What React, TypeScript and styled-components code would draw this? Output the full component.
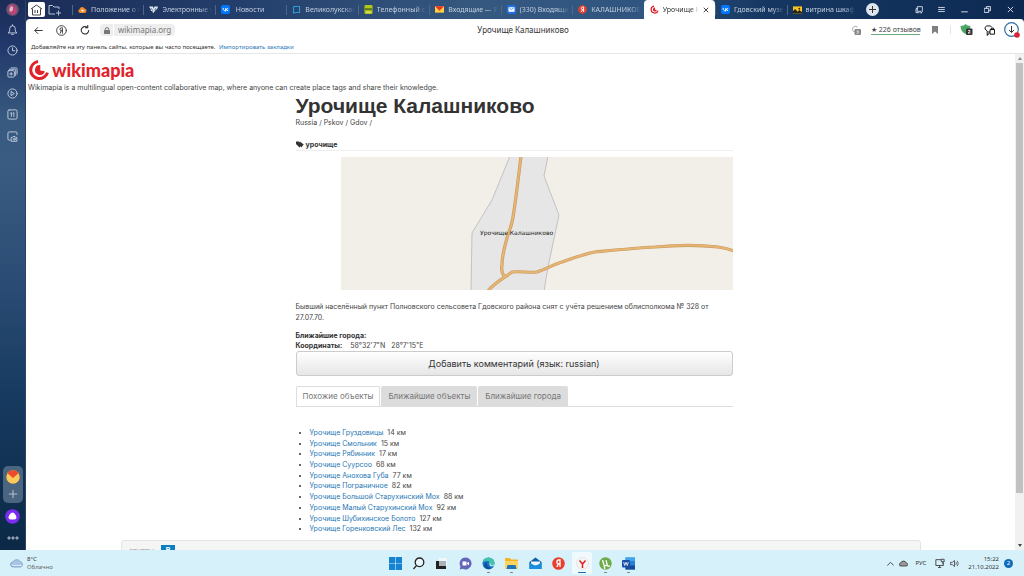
import React from 'react';
import styled, { createGlobalStyle, css } from 'styled-components';

const ui = '"Noto Sans", "Open Sans", sans-serif';
const arial = '"Liberation Sans", Arial, sans-serif';
const body = 'Inter, "Liberation Sans", Arial, sans-serif';

const Global = createGlobalStyle`
  *, *::before, *::after { box-sizing: border-box; }
  body { margin: 0; background: #fff; overflow: hidden; }
  button, input { font: inherit; color: inherit; border: 0; padding: 0; margin: 0; background: none; }
  a { text-decoration: none; }
  svg { display: block; flex: none; }
`;

/* ---------- shell ---------- */
const Desktop = styled.div`
  height: 100vh;
  display: flex;
  flex-direction: column;
  font-family: ${ui};
  font-size: 7px;
`;
const Browser = styled.div`
  flex: 1;
  min-height: 0;
  display: flex;
  background: #1c2f5b;
`;
const Sidebar = styled.nav`
  width: 26px;
  flex: none;
  display: flex;
  flex-direction: column;
  align-items: center;
  color: #c6d2e2;
  border-right: 1px solid #2b4468;
  background: linear-gradient(#1b2c57 0, #21386a 8%, #385a80 22%, #3a5c82 30%, #2a4c74 52%, #173a60 72%, #0b2946 100%);
`;
const Avatar = styled.button`
  width: 13px;
  height: 13px;
  margin: 3px 0;
`;
const SideTools = styled.div`
  height: 128px;
  display: grid;
  grid-auto-rows: 1fr;
`;
const SideButton = styled.button`
  width: 24px;
  display: flex;
  align-items: center;
  justify-content: center;
`;
const SideBottom = styled.div`
  margin-top: auto;
  padding-bottom: 6px;
  display: flex;
  flex-direction: column;
  align-items: center;
  gap: 6px;
`;
const Pinned = styled.div`
  width: 20px;
  height: 37px;
  border-radius: 5px;
  background: #4b6580;
  display: flex;
  flex-direction: column;
  align-items: center;
  justify-content: space-evenly;
`;
const Main = styled.div`
  flex: 1;
  min-width: 0;
  display: flex;
  flex-direction: column;
`;

/* ---------- tab strip ---------- */
const Strip = styled.div`
  height: 19px;
  flex: none;
  display: flex;
  color: #c3cfdf;
  background: linear-gradient(90deg, #1b2c57 0, #243f6c 22%, #35587f 45%, #2f5580 62%, #163761 74%, #10305a 90%, #0d2850 100%);
`;
const StripStart = styled.div`
  width: 46px;
  flex: none;
  display: flex;
  align-items: center;
  gap: 3px;
  padding-left: 2px;
`;
const HomeTab = styled.button`
  width: 17px;
  height: 15px;
  border-radius: 2px;
  background: #fff;
  display: grid;
  place-items: center;
`;
const PlainButton = styled.button`
  display: grid;
  place-items: center;
`;
const Tabs = styled.div`
  flex: 1;
  min-width: 0;
  display: grid;
  grid-auto-flow: column;
  grid-auto-columns: minmax(0, 1fr);
`;
const fade = css`
  mask-image: linear-gradient(90deg, #000 78%, transparent 100%);
  overflow: hidden;
  white-space: pre;
`;
const Tab = styled.button<{ $active?: boolean }>`
  display: flex;
  align-items: center;
  gap: 4px;
  padding: 0 3px 0 0;
  text-align: left;
  font-size: 7px;
  line-height: 19px;
  &::before {
    content: '';
    width: 1px;
    height: 10px;
    margin-right: 1px;
    background: ${p => (p.$active ? 'transparent' : '#4d6788')};
  }
  ${p => p.$active && css`
    padding-right: 6px;
    background: #fff;
    color: #333;
    border-radius: 4px 4px 0 0;
  `}
`;
const TabLabel = styled.span`
  flex: 1;
  min-width: 0;
  ${fade}
`;
const WindowControls = styled.div`
  width: 166px;
  flex: none;
  display: flex;
  align-items: center;
  padding: 0 2px 0 8px;
`;
const NewTab = styled.button`
  width: 13px;
  height: 13px;
  border-radius: 50%;
  background: #dfe5ec;
  display: grid;
  place-items: center;
  margin-right: auto;
`;
const ControlButton = styled.button`
  width: 23px;
  height: 19px;
  display: grid;
  place-items: center;
  color: #dbe4ee;
`;

/* ---------- toolbar ---------- */
const Chrome = styled.div`
  flex: none;
  background: #fff;
  border-radius: 4px 4px 0 0;
  border-bottom: 1px solid #e6e6e6;
`;
const Toolbar = styled.div`
  height: 22px;
  display: grid;
  grid-template-columns: 1fr auto 1fr;
  align-items: center;
  padding-right: 4px;
`;
const ToolLeft = styled.div`
  display: flex;
  align-items: center;
  padding-left: 1px;
`;
const NavButton = styled.button`
  width: 23px;
  height: 16px;
  display: grid;
  place-items: center;
  color: #333;
`;
const Lock = styled.button`
  width: 13px;
  height: 12px;
  margin-left: 4px;
  border-radius: 4px 0 0 4px;
  background: #eee;
  display: grid;
  place-items: center;
`;
const Address = styled.input`
  width: 61px;
  height: 12px;
  margin-left: 1px;
  padding: 0 4px;
  border-radius: 0 4px 4px 0;
  background: #eee;
  color: #777;
  font-size: 8px;
  line-height: 12px;
`;
const PageTitle = styled.div`
  font-size: 8px;
  line-height: 12px;
  color: #333;
`;
const ToolRight = styled.div`
  display: flex;
  align-items: center;
  justify-content: flex-end;
  gap: 7px;
`;
const ToolButton = styled.button`
  width: 16px;
  height: 16px;
  display: grid;
  place-items: center;
`;
const Reviews = styled.button`
  && { border-bottom: 1px solid #6fae7c; }
  width: 49px;
  font-size: 7px;
  line-height: 9px;
  color: #444;
  white-space: nowrap;
`;
const Divider = styled.span`
  width: 1px;
  height: 8px;
  background: #e4e4e4;
`;
const Bookmarks = styled.div`
  height: 12px;
  padding-left: 5px;
  font-size: 6px;
  line-height: 12px;
  color: #333;
  a { color: #2a7ab8; margin-left: 2px; }
`;

/* ---------- page ---------- */
const Viewport = styled.div`
  flex: 1;
  min-height: 0;
  display: flex;
  background: #fff;
`;
const Page = styled.main`
  flex: 1;
  min-width: 0;
  overflow: hidden;
  padding-top: 5px;
  font-family: ${body};
  font-size: 7px;
  line-height: 11px;
  color: #444;
`;
const Scrollbar = styled.div`
  width: 9px;
  flex: none;
  display: flex;
  flex-direction: column;
  align-items: center;
  background: #f1f1f1;
`;
const Arrow = styled.span<{ $down?: boolean }>`
  height: 9px;
  display: grid;
  place-items: center;
  &::before {
    content: '';
    border: 2px solid transparent;
    ${p => (p.$down ? 'border-top: 3px solid #444; border-bottom: 0;' : 'border-bottom: 3px solid #888; border-top: 0;')}
  }
`;
const Track = styled.div`
  flex: 1;
  width: 100%;
  padding: 0 1px;
`;
const Thumb = styled.div`
  height: 90%;
  background: #c1c1c1;
`;
const Logo = styled.a`
  height: 22px;
  margin-left: 2px;
  display: flex;
  align-items: center;
  gap: 2px;
  color: #e0222b;
  font: 900 18px/20px Lato, sans-serif;
  width: max-content;
`;
const Tagline = styled.p`
  margin: 0 0 0 2px;
  line-height: 13px;
`;
const Container = styled.div`
  max-width: 800px;
  margin: 0 auto;
`;
const Column = styled.article`
  max-width: 437px;
  margin-left: 175px;
`;
const Heading = styled.h1`
  margin: 0;
  font-family: ${arial};
  font-size: 21px;
  line-height: 23px;
  color: #333;
`;
const Crumbs = styled.nav`
  a { color: #444; }
`;
const TagRow = styled.div`
  margin-top: 11px;
  display: flex;
  align-items: center;
  gap: 2px;
  border-bottom: 1px solid #eee;
  color: #333;
  font-weight: bold;
`;
const MapBox = styled.div`
  margin: 6px 0 11px 45px;
  height: 133px;
  background: #f2efe9;
  svg { width: 100%; height: 100%; }
`;
const Paragraph = styled.p`
  margin: 0 0 7px;
`;
const Fact = styled.div<{ $tight?: boolean }>`
  line-height: ${p => (p.$tight ? 10 : 11)}px;
  b { color: #333; margin-right: 6px; }
  span { margin-right: 4px; }
`;
const CommentButton = styled.button`
  && { border: 1px solid #ccc; }
  display: block;
  width: 100%;
  height: 25px;
  border-radius: 3px;
  background: linear-gradient(#fff, #e6e6e6);
  font-size: 9px;
  color: #333;
`;
const PageTabs = styled.div`
  margin-top: 10px;
  display: flex;
  gap: 1px;
  border-bottom: 1px solid #ddd;
`;
const PageTab = styled.button<{ $active?: boolean }>`
  && { border: 1px solid #ddd; border-bottom: 0; }
  height: 20px;
  padding: 0 6px;
  border-radius: 2px 2px 0 0;
  font-size: 8px;
  color: #777;
  background: ${p => (p.$active ? '#fff' : '#dcdcdc')};
  && { margin-bottom: ${p => (p.$active ? '-1px' : '0')}; }
`;
const Places = styled.ul`
  height: 107px;
  margin: 21px 0 5px;
  padding-left: 14px;
  line-height: 10px;
  display: grid;
  grid-auto-rows: minmax(0, 1fr);
  a { color: #1f77b5; margin-right: 4px; }
  li::marker { color: #333; }
`;
const Footer = styled.footer`
  height: 30px;
  padding: 4px 8px;
  display: flex;
  gap: 7px;
  border: 1px solid #e3e3e3;
  border-radius: 3px 3px 0 0;
  background: #f5f5f5;
  color: #999;
  line-height: 12px;
`;
const VkLink = styled.a`
  width: 14px;
  height: 14px;
  background: #0d7fc0;
  color: #fff;
  text-align: center;
  font-weight: bold;
`;

/* ---------- taskbar ---------- */
const Taskbar = styled.footer`
  height: 26px;
  flex: none;
  display: grid;
  grid-template-columns: 1fr auto 1fr;
  align-items: center;
  background: #d7f1fa;
  color: #333;
  font-size: 6px;
  line-height: 8px;
`;
const Weather = styled.button`
  display: flex;
  align-items: center;
  gap: 3px;
  && { padding-left: 10px; }
  text-align: left;
  span { display: block; }
  span + span { color: #666; }
`;
const Apps = styled.div`
  width: 257px;
  height: 26px;
  display: grid;
  grid-auto-flow: column;
  grid-auto-columns: 1fr;
`;
const AppButton = styled.button<{ $mark?: 'open' | 'active' }>`
  display: flex;
  flex-direction: column;
  align-items: center;
  justify-content: flex-end;
  gap: 2px;
  height: 22px;
  margin: 2px 2px;
  border-radius: 2px;
  background: ${p => (p.$mark === 'active' ? '#f0fafd' : 'transparent')};
  &::after {
    content: '';
    height: 1px;
    border-radius: 1px;
    margin-bottom: 1px;
    width: ${p => (p.$mark === 'active' ? 8 : 3)}px;
    background: ${p => (p.$mark === 'active' ? '#1470b8' : p.$mark ? '#6d8490' : 'transparent')};
  }
`;
const Tray = styled.div`
  display: flex;
  align-items: center;
  justify-content: flex-end;
  gap: 5px;
  padding-right: 11px;
`;
const Language = styled.button`
  font-size: 6px;
  margin: 0 4px 0 3px;
`;
const Clock = styled.button`
  text-align: right;
  margin-left: 4px;
  span { display: block; }
`;
const Badge = styled.span`
  width: 9px;
  height: 9px;
  border-radius: 50%;
  background: #0f6cbd;
  color: #fff;
  text-align: center;
  line-height: 9px;
`;

/* ---------- drawings ---------- */
const Line = ({ s = 11, children, w = 1, vb = 12 }: { s?: number; w?: number; vb?: number; children: React.ReactNode }) => (
  <svg width={s} height={s} viewBox={`0 0 ${vb} ${vb}`} fill="none" stroke="currentColor" strokeWidth={w} strokeLinecap="round" strokeLinejoin="round" aria-hidden="true">
    {children}
  </svg>
);

const Swirl = ({ s }: { s: number }) => (
  <svg width={s} height={s} viewBox="0 0 22 22" aria-hidden="true">
    <path d="M10 2.500A8.600 8.600 0 1 0 19.500 13.600" fill="none" stroke="#e0222b" strokeWidth="3" />
    <path d="M12.300 6V11.500l4.500.8A5 5 0 1 1 12.300 6z" fill="#e0222b" />
  </svg>
);

const Vk = () => (
  <svg width="9" height="9" viewBox="0 0 9 9"><rect width="9" height="9" rx="2" fill="#0077ff" /><path d="M2 3c.2 2 1.200 3 2.800 3V3M7 3C6.500 4 5.800 4.500 4.800 4.500 5.800 4.600 6.600 5.200 7 6" stroke="#fff" fill="none" /></svg>
);

const favicons: Record<string, React.ReactNode> = {
  cloud: <svg width="9" height="9" viewBox="0 0 9 9"><path d="M2.200 8A2 2 0 0 1 1.500 4.200 2.700 2.700 0 0 1 6.600 3.500 2.300 2.300 0 0 1 6.800 8z" fill="#f08a2c" /><circle cx="4.500" cy="5.600" r="1.200" fill="#fff3dc" /></svg>,
  wings: <svg width="9" height="9" viewBox="0 0 9 9"><path d="M0 1.500h4l.7 2 .8-2H9L8 4.500H6.500L6 6.500H5L4.500 8.500 3 6H2L1.500 4z" fill="#dde5ee" /><path d="M2 3l2 3M7 3L5.500 5" stroke="#2c466f" strokeWidth=".6" /></svg>,
  vk: <Vk />,
  book: <svg width="9" height="9" viewBox="0 0 9 9"><path d="M2 1.500h5.500v6H4M4 7.500L1.500 8V2L3 1.500" stroke="#2e9bd6" fill="none" strokeWidth="1.100" /></svg>,
  phone: <svg width="9" height="9" viewBox="0 0 9 9"><rect x=".5" width="8" height="9" rx="1" fill="#b4c51c" /><path d="M1 3.200h7v2H1z" fill="#5b7c14" /><path d="M2 7h5" stroke="#e9ef9a" /></svg>,
  mail: <svg width="9" height="9" viewBox="0 0 10 9"><path d="M0 1h10v7H0z" fill="#ffcf3f" /><path d="M0 1h10L5 6z" fill="#e8342a" /></svg>,
  at: <svg width="9" height="9" viewBox="0 0 9 9"><rect width="9" height="9" rx="2" fill="#1f6fe5" /><path d="M1.500 2.200h6v4.600h-6z" fill="#fff" /><path d="M2.500 3l2 1.500 2-1.500" stroke="#1f6fe5" fill="none" strokeWidth=".8" /></svg>,
  ya: <svg width="9" height="9" viewBox="0 0 10 10"><circle cx="5" cy="5" r="4.800" fill="#e3402f" /><path d="M6.200 7.800V2.200H5.300a1.500 1.500 0 0 0 0 3.100h.9M5 5.300L3.700 7.800" stroke="#fff" fill="none" /></svg>,
  swirl: <Swirl s={9} />,
  photo: <svg width="9" height="8" viewBox="0 0 10 8"><path d="M0 0h10v8H0z" fill="#f8c51f" /><path d="M0 8V5l2.500-2L5 6l2-2 3 2.500V8z" fill="#26231a" /><circle cx="7" cy="2.500" r="1" fill="#26231a" /></svg>,
};

const tabs = [
  ['cloud', 'Положение о п'],
  ['wings', 'Электронные у'],
  ['vk', ' Новости'],
  ['book', 'Великолукская'],
  ['phone', 'Телефонный с'],
  ['mail', 'Входящие — Я'],
  ['at', '(330) Входящи'],
  ['ya', 'КАЛАШНИКОВ'],
  ['swirl', 'Урочище Ка'],
  ['vk', 'Гдовский музе'],
  ['photo', 'витрина шкаф'],
];

const places: [string, number][] = [
  ['Груздовицы', 14], ['Смольник', 15], ['Рябинник', 17], ['Суурсоо', 68], ['Анохова Губа', 77],
  ['Пограничное', 82], ['Большой Старухинский Мох', 88], ['Малый Старухинский Мох', 92],
  ['Шубихинское Болото', 127], ['Горенковский Лес', 132],
];

const sideTools: [string, React.ReactNode][] = [
  ['Уведомления', <Line><path d="M1.500 9.500c1.500-1 1.500-2.500 1.500-4.500a3 3 0 0 1 6 0c0 2 0 3.500 1.500 4.500zM5 11.300h2M6 .8v1" /></Line>],
  ['История', <Line><circle cx="6" cy="6" r="5" /><path d="M6 3v3.300h2.500" /></Line>],
  ['Коллекции', <Line><rect x="1" y="4" width="7" height="7" rx="1" /><path d="M2.500 2.500h6a1 1 0 0 1 1 1v6M4.500 1h5.500a1 1 0 0 1 1 1v5.500M3 7.500h3M4.500 6v3" /></Line>],
  ['Видео', <Line><circle cx="6" cy="6" r="5" /><path d="M4.800 3.900L8 6 4.800 8.100z" /></Line>],
  ['Табло', <Line><rect x="1" y="1" width="10" height="10" rx="1.500" /><path d="M3.800 4.500l1-.5v4M6.500 4.500l1-.5v4" /></Line>],
  ['Скриншот', <Line><path d="M3.500 10H2.500A1.500 1.500 0 0 1 1 8.500v-6A1.500 1.500 0 0 1 2.500 1h7A1.500 1.500 0 0 1 11 2.500V4M5 7h1l.7-1h2l.7 1h1.400v4.200H5z" /><circle cx="8" cy="8.900" r="1" /></Line>],
];

const apps: [string, 'open' | 'active' | undefined, React.ReactNode][] = [
  ['Пуск', undefined, <path d="M0 0h6.200v6.200H0zM6.800 0H13v6.200H6.800zM0 6.800h6.200V13H0zM6.800 6.800H13V13H6.800z" fill="#1383d2" />],
  ['Поиск', undefined, <path d="M4.600 8.400L1.500 12M11.800 5.300a4.300 4.300 0 1 1-8.600 0 4.300 4.300 0 0 1 8.600 0z" stroke="#222" strokeWidth="1.300" fill="#e8f6fb" />],
  ['Задачи', undefined, <><path d="M4 1h8v8H4z" fill="#f4f7f9" /><path d="M1 4h3v5h7v3H1z" fill="#222" /><path d="M4 4h7v5H4z" fill="#aab2b8" /></>],
  ['Чат', undefined, <><path d="M6.500.5a6 6 0 1 1-2.800 11.300L.8 12.500l.6-3A6 6 0 0 1 6.500.5z" fill="#6464b8" /><path d="M3.500 4.500h4v4h-4zM8 6l2-1.200v3.500L8 7z" fill="#fff" /></>],
  ['Edge', 'open', <><circle cx="6.500" cy="6.500" r="6" fill="#1674c5" /><path d="M.8 5A6 6 0 0 1 12.500 6c0 2-1.500 3-3.500 2.800-1-.1-1.300-.7-.9-1.400C8.800 5.500 7 3.800 4.800 3.900 3 4 1.500 4.500.8 5z" fill="#3fc6a6" /><path d="M5 5.500c-.8 2.500 1 5 4.500 5.400-1.500 1.500-5 1.500-6.500-1S3 5.500 5 5.500z" fill="#104f95" /><path d="M7 6c1 0 1.300.8 1 1.800S9.500 9.500 12 8" stroke="#fff" fill="none" strokeWidth=".9" /></>],
  ['Проводник', 'open', <><path d="M0 1h5l1.200 1.500H13V12H0z" fill="#f0b52a" /><path d="M0 4h13v8H0z" fill="#fcd462" /><path d="M2.500 8h8l1 4h-10z" fill="#1c74bd" /></>],
  ['Почта', undefined, <><path d="M.5 5l6-4.500 6 4.500v7H.5z" fill="#1060a8" /><path d="M2 4.500h9v4H2z" fill="#e9f6ff" /><path d="M.5 5.500l6 3.500 6-3.500V12H.5z" fill="#1a8edb" /></>],
  ['Яндекс', undefined, <><circle cx="6.500" cy="6.500" r="6.300" fill="#e8402f" /><path d="M8 10V3H6.800a1.900 1.900 0 0 0 0 3.800H8M6.500 6.800L4.800 10" stroke="#fff" fill="none" strokeWidth="1.300" /></>],
  ['Яндекс Браузер', 'active', <><circle cx="6.500" cy="6.500" r="6" fill="#f6f6f6" stroke="#dcd3d3" strokeWidth=".5" /><path d="M3.500 3.500L6.500 7v4M9.500 3.500L6.500 7" stroke="#e01e1e" fill="none" strokeWidth="1.500" /></>],
  ['uTorrent', 'open', <><circle cx="6.500" cy="6.500" r="6.200" fill="#6cab48" /><path d="M3.500 3l1.300 4.500c.5 1.500 3.500 1.500 3.200-.5L7 3.200M8 8c.5 1.500 2 1.500 3 .8M5 8.500L6 12" stroke="#fff" fill="none" strokeWidth="1.300" /></>],
  ['Word', 'open', <><path d="M3.500.5H13v12H3.500z" fill="#2b7cd3" /><path d="M3.500.5H13v3.500H3.500z" fill="#41a5ee" /><path d="M3.500 8.500H13v4H3.500z" fill="#154a94" /><rect y="3" width="8" height="7.500" rx="1" fill="#1a50a8" /><path d="M1.700 5l1 3.500L4 5.300l1.300 3.200 1-3.500" stroke="#fff" fill="none" strokeWidth=".8" /></>],
];

const MapView = () => (
  <MapBox>
    <svg viewBox="0 0 392 133" preserveAspectRatio="xMidYMid slice" role="img" aria-label="Карта">
      <path d="M169-1L151 43 131 76 130 134H203L207 110 218 58 203 19 207-1z" fill="#e6e6e6" stroke="#b8b8b8" strokeWidth=".8" />
      <g fill="none" strokeLinejoin="round">
        {['#c99a5e', '#e6b573'].map((c, i) => (
          <g key={c} stroke={c} strokeWidth={i ? 2 : 3.2}>
            <path d="M180-1C178 16 174 48 172 60 171 68 168 74 166 81 163 92 161 98 161 108 160 114 161 117 164 120" />
            <path d="M147 134C153 126 163 121 171 115 179 114 188 116 196 115 206 112 213 107 221 105 232 101 243 97 254 95 275 93 295 91 314 90 335 88 360 88 377 90 384 91 388 92 393 94" />
          </g>
        ))}
      </g>
      <text x="139" y="78" fontFamily="DejaVu Sans" fontSize="6" fill="#222">Урочище Калашниково</text>
    </svg>
  </MapBox>
);

export default function App() {
  return (
    <Desktop>
      <Global />
      <Browser>
        <Sidebar>
          <Avatar aria-label="Профиль">
            <svg width="13" height="13" viewBox="0 0 13 13"><circle cx="6.500" cy="6.500" r="6.300" fill="#71536f" /><path d="M3 2l3-1 3 2 2 4-2 4-3 1-3-3z" fill="#b0487e" /><path d="M5 3l2 1v3L5 9 3 7z" fill="#dcb6c5" /><path d="M8 6l2 1-1 3-2 1z" fill="#d83b7a" /></svg>
          </Avatar>
          <SideTools>
            {sideTools.map(([name, icon]) => <SideButton key={name} aria-label={name}>{icon}</SideButton>)}
          </SideTools>
          <SideBottom>
            <Pinned>
              <PlainButton aria-label="Почта">
                <svg width="14" height="14" viewBox="0 0 14 14"><circle cx="7" cy="7" r="6.700" fill="#fdc95a" /><path d="M1.500 3.200a6.700 6.700 0 0 1 11 0L7 8z" fill="#ee4b2b" /></svg>
              </PlainButton>
              <PlainButton aria-label="Добавить"><Line s={10}><path d="M6 1.500v9M1.500 6h9" /></Line></PlainButton>
            </Pinned>
            <PlainButton aria-label="Алиса">
              <svg width="15" height="15" viewBox="0 0 15 15"><circle cx="7.500" cy="7.500" r="7.300" fill="#7a2df0" /><path d="M7.500 3.500c2 0 4 3.500 4 5.200 0 1.300-1.800 1.900-4 1.900s-4-.6-4-1.900c0-1.700 2-5.200 4-5.200z" fill="#fff" /></svg>
            </PlainButton>
            <PlainButton aria-label="Ещё">
              <svg width="12" height="14" viewBox="0 0 12 14" fill="none" stroke="#c6d2e2"><circle cx="2" cy="8" r="1.100" /><circle cx="6" cy="8" r="1.100" /><circle cx="10" cy="8" r="1.100" /></svg>
            </PlainButton>
          </SideBottom>
        </Sidebar>

        <Main>
          <Strip>
            <StripStart>
              <HomeTab aria-label="Табло">
                <svg width="13" height="12" viewBox="0 0 13 12" fill="none" stroke="#444"><path d="M1 5l5.500-4L12 5M2.500 4.500V11h8V4.500M5 6v3M7.500 6v3" /></svg>
              </HomeTab>
              <PlainButton aria-label="Новая группа">
                <svg width="14" height="12" viewBox="0 0 14 12" fill="none" stroke="#b6c3d6"><path d="M7 10H1V1.500h3.500L6 3h5v2M10.500 6.500v5M8 9h5" /></svg>
              </PlainButton>
            </StripStart>
            <Tabs role="tablist">
              {tabs.map(([icon, label]) => {
                const active = icon === 'swirl';
                return (
                  <Tab key={label} role="tab" aria-selected={active} $active={active}>
                    {favicons[icon]}
                    <TabLabel>{label}</TabLabel>
                    {active && <Line s={6}><path d="M2 2l8 8M10 2l-8 8" strokeWidth="1.800" /></Line>}
                  </Tab>
                );
              })}
            </Tabs>
            <WindowControls>
              <NewTab aria-label="Новая вкладка"><svg width="7" height="7" viewBox="0 0 7 7" stroke="#333"><path d="M3.500 0v7M0 3.500h7" /></svg></NewTab>
              <ControlButton aria-label="Боковая панель"><Line s={8} w={1.3}><path d="M4 1h7v7l-2 3V8H4zM4 4H1.500v6H6" /></Line></ControlButton>
              <ControlButton aria-label="Меню"><Line s={7} w={1.5}><path d="M1 2.500h10M1 6h10M1 9.500h10" /></Line></ControlButton>
              <ControlButton aria-label="Свернуть"><Line s={7} w={1.6}><path d="M1 10h10" /></Line></ControlButton>
              <ControlButton aria-label="Восстановить"><Line s={7} w={1.6}><path d="M1 4h7v7H1zM4 4V1h7v7H8" /></Line></ControlButton>
              <ControlButton aria-label="Закрыть"><Line s={7} w={1.6}><path d="M2 2l8 8M10 2l-8 8" /></Line></ControlButton>
            </WindowControls>
          </Strip>

          <Chrome>
            <Toolbar>
              <ToolLeft>
                <NavButton aria-label="Назад"><Line s={9} w={1.300}><path d="M11 6H1.500M5 2L1 6l4 4" /></Line></NavButton>
                <NavButton aria-label="Яндекс"><Line s={11}><circle cx="6" cy="6" r="5.300" /><path d="M7 9V3H6a1.500 1.500 0 0 0 0 3.200h1M5.800 6.200L4.500 9" /></Line></NavButton>
                <NavButton aria-label="Обновить"><Line s={10} w={1.300}><path d="M10.500 6.500A4.500 4.500 0 1 1 8.500 2.500M6.500 3.300h2.800V.5" /></Line></NavButton>
                <Lock aria-label="Защищённое соединение"><svg width="6" height="7" viewBox="0 0 6 7"><rect y="3" width="6" height="4" rx=".5" fill="#777" /><path d="M1.300 3V2.300a1.700 1.700 0 0 1 3.400 0V3" fill="none" stroke="#777" /></svg></Lock>
                <Address aria-label="Адрес" defaultValue="wikimapia.org" />
              </ToolLeft>
              <PageTitle>Урочище Калашниково</PageTitle>
              <ToolRight>
                <ToolButton aria-label="Переводчик"><svg width="12" height="12" viewBox="0 0 12 12"><path d="M5 7.500H3.500A3 3 0 1 1 7.500 3" fill="none" stroke="#aaa" /><rect x="4.500" y="5" width="6.500" height="6" rx="1" fill="#888" /><path d="M6.500 7h2L7.500 8.200c1.500 0 1.200 1.600-.8 1.300" fill="none" stroke="#fff" strokeWidth=".7" /></svg></ToolButton>
                <Reviews>★ 226 отзывов</Reviews>
                <ToolButton aria-label="Закладка"><svg width="6" height="8" viewBox="0 0 6 8"><path d="M0 0h6v8L3 5.500 0 8z" fill="#808080" /></svg></ToolButton>
                <Divider />
                <ToolButton aria-label="Защита"><svg width="13" height="12" viewBox="0 0 13 12"><path d="M.5 2C3 2 4.500 1 5.500 0c1 1 2.500 2 5 2 0 4-2 6.500-5 8-3-1.500-5-4-5-8z" fill="#4ca765" /><rect x="6" y="4.500" width="6.500" height="6.500" rx="1" fill="#333" /><path d="M8 6.500h2v1L8 9h2.500" fill="none" stroke="#fff" strokeWidth=".8" /></svg></ToolButton>
                <ToolButton aria-label="Пароли"><Line s={11}><path d="M3.500 11V6.500L1.200 4.500V2.500L3 1h4l1.500 1.500M3.500 11L5.500 9.500V7M7 5h4.500v5H7zM8 5V3.500h2.500V5" /></Line></ToolButton>
                <ToolButton aria-label="Загрузки"><svg width="16" height="16" viewBox="0 0 16 16"><circle cx="7.500" cy="7.500" r="6.800" fill="none" stroke="#2b6fa8" strokeWidth="1.200" /><path d="M7.500 4v6.500M5 8l2.500 2.500L10 8" stroke="#333" fill="none" /><circle cx="13" cy="13" r="2.800" fill="#e01f36" /></svg></ToolButton>
              </ToolRight>
            </Toolbar>
            <Bookmarks>Добавляйте на эту панель сайты, которые вы часто посещаете. <a href="#import">Импортировать закладки</a></Bookmarks>
          </Chrome>

          <Viewport>
            <Page>
              <Logo href="#home"><Swirl s={22} />wikimapia</Logo>
              <Tagline>Wikimapia is a multilingual open-content collaborative map, where anyone can create place tags and share their knowledge.</Tagline>
              <Container>
                <Column>
                  <Heading>Урочище Калашниково</Heading>
                  <Crumbs><a href="#russia">Russia</a> / <a href="#pskov">Pskov</a> / <a href="#gdov">Gdov</a> /</Crumbs>
                  <TagRow>
                    <svg width="8" height="7" viewBox="0 0 8 7"><path d="M0 .5h3L6 3.500 3.500 6.500 0 3zM4 .5L7.700 3.500 5 6.800" fill="#333" /></svg>
                    урочище
                  </TagRow>
                  <MapView />
                  <Paragraph>Бывший населённый пункт Полновского сельсовета Гдовского района снят с учёта решением облисполкома № 328 от 27.07.70.</Paragraph>
                  <Fact><b>Ближайшие города:</b></Fact>
                  <Fact $tight><b>Координаты:</b> <span>58°32'7"N</span> <span>28°7'15"E</span></Fact>
                  <CommentButton>Добавить комментарий (язык: russian)</CommentButton>
                  <PageTabs role="tablist">
                    <PageTab role="tab" aria-selected $active>Похожие объекты</PageTab>
                    <PageTab role="tab">Ближайшие объекты</PageTab>
                    <PageTab role="tab">Ближайшие города</PageTab>
                  </PageTabs>
                  <Places>
                    {places.map(([name, km]) => <li key={name}><a href="#place">Урочище {name}</a>{km} км</li>)}
                  </Places>
                </Column>
                <Footer>группы <VkLink href="#vk">B</VkLink></Footer>
              </Container>
            </Page>
            <Scrollbar aria-hidden="true"><Arrow /><Track><Thumb /></Track><Arrow $down /></Scrollbar>
          </Viewport>
        </Main>
      </Browser>

      <Taskbar>
        <Weather>
          <svg width="14" height="10" viewBox="0 0 14 10"><path d="M3 9a2.500 2.500 0 0 1 0-5 4 4 0 0 1 7-.5A3 3 0 0 1 11 9z" fill="#a9c6e6" stroke="#7899c4" strokeWidth=".8" /><path d="M2 7.500h10" stroke="#dbe9f8" /></svg>
          <div><span>8°C</span><span>Облачно</span></div>
        </Weather>
        <Apps>
          {apps.map(([name, mark, art]) => (
            <AppButton key={name} aria-label={name} $mark={mark}>
              <svg width="13" height="13" viewBox="0 0 13 13" fill="none">{art}</svg>
            </AppButton>
          ))}
        </Apps>
        <Tray>
          <Line s={7} w={1.500}><path d="M1 9l5-5 5 5" /></Line>
          <svg width="9" height="7" viewBox="0 0 9 7"><path d="M2 6a1.500 1.500 0 0 1-.3-3 3 3 0 0 1 5.600 0A1.500 1.500 0 0 1 7 6z" fill="#999" stroke="#333" strokeWidth=".8" /></svg>
          <Language>РУС</Language>
          <Line s={10}><path d="M7 2H1v7h9V6M4 11.500h3M5.500 9v2M8 1.500h3v3H8zM9.500 4.500V7" /></Line>
          <Line s={9}><path d="M1 4.500h2L6 2v8L3 7.500H1zM8 4.500c.8 1 .8 2 0 3M9.800 3c1.500 2 1.500 4 0 6" /></Line>
          <Clock><span>15:22</span><span>21.10.2022</span></Clock>
          <Badge>2</Badge>
        </Tray>
      </Taskbar>
    </Desktop>
  );
}
